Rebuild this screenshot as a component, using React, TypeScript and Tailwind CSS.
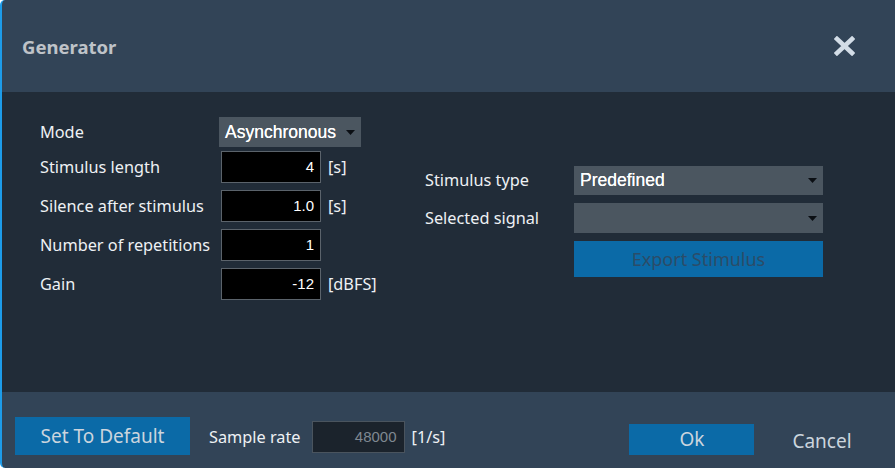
import React from "react";

const LABEL_FONT = "font-['Noto_Sans',sans-serif]";
const FIELD_FONT = "font-['Liberation_Sans',Arial,sans-serif]";

type FieldRow = {
  label: string;
  value: string;
  unit?: string;
};

const FIELDS: FieldRow[] = [
  { label: "Stimulus length", value: "4", unit: "[s]" },
  { label: "Silence after stimulus", value: "1.0", unit: "[s]" },
  { label: "Number of repetitions", value: "1" },
  { label: "Gain", value: "-12", unit: "[dBFS]" },
];

const Caret = () => (
  <svg width="9" height="5" viewBox="0 0 9 5" className="shrink-0">
    <path d="M0 0h9L4.5 5z" fill="#0b0f14" />
  </svg>
);

const CloseIcon = () => (
  <svg width="21" height="20" viewBox="0 0 21 20">
    <path
      d="M3 3l15 14M18 3L3 17"
      stroke="#d3dde7"
      strokeWidth="4.6"
      strokeLinecap="square"
    />
  </svg>
);

const Select = ({ value, className }: { value: string; className: string }) => (
  <div
    className={`flex items-center justify-between bg-[#4b5660] pl-[6px] pr-[6px] text-[17.5px] text-white ${FIELD_FONT} ${className}`}>
    <span className="[text-shadow:0_0_0.4px_#fff]">{value}</span>
    <Caret />
  </div>
);

const NumberInput = ({ value }: { value: string }) => (
  <div
    className={`flex h-[32px] w-[100px] items-center justify-end border border-[#5b636b] bg-black pr-[6px] text-[15px] text-white ${FIELD_FONT}`}>
    {value}
  </div>
);

export default function App() {
  return (
    <div
      className={`flex h-[468px] w-[895px] flex-col overflow-hidden rounded-l-[5px] border-l-2 border-[#1d9ce9] bg-[#324457] ${LABEL_FONT}`}>
      {/* header */}
      <div className="flex h-[92px] shrink-0 items-center justify-between pl-[20px] pr-[40px]">
        <h1 className="mt-[2px] text-[18.5px] font-bold text-[#bfc3c8]">Generator</h1>
        <CloseIcon />
      </div>

      {/* body */}
      <div className="flex flex-1 bg-[#212c38] pl-[38px] pt-[25px] text-[16.3px] text-[#eef1f4]">
        <div className="flex w-[385px] flex-col">
          <div className="flex h-[30px] items-center">
            <span className="w-[179px]">Mode</span>
            <Select value="Asynchronous" className="h-[30px] w-[142px]" />
          </div>
          <div className="mt-[4px] flex flex-col gap-[7px]">
            {FIELDS.map((field) => (
              <div key={field.label} className="flex h-[32px] items-center">
                <span className="w-[181px]">{field.label}</span>
                <NumberInput value={field.value} />
                {field.unit && <span className="ml-[7px]">{field.unit}</span>}
              </div>
            ))}
          </div>
        </div>

        <div className="flex flex-col pt-[49px]">
          <div className="flex h-[29px] items-center">
            <span className="w-[149px]">Stimulus type</span>
            <Select value="Predefined" className="h-[29px] w-[249px]" />
          </div>
          <div className="mt-[8px] flex h-[30px] items-center">
            <span className="w-[149px]">Selected signal</span>
            <Select value="" className="h-[30px] w-[249px]" />
          </div>
          <div className="mt-[8px] flex">
            <div className="w-[149px]" />
            <button className="h-[36px] w-[249px] bg-[#0b6aa7] text-[18px] text-[#2b4c68]">
              Export Stimulus
            </button>
          </div>
        </div>
      </div>

      {/* footer */}
      <div className="flex h-[76px] shrink-0 items-start pl-[13px] pt-[25px] text-[16.3px] text-[#eef1f4]">
        <button className="h-[38px] w-[175px] bg-[#0b6aa7] text-[19px] text-[#cbd5de]">
          Set To Default
        </button>
        <span className="ml-[19px] mt-[8px]">Sample rate</span>
        <div
          className={`ml-[11px] mt-[4px] flex h-[32px] w-[93px] items-center justify-end border border-[#4a545e] bg-[#1b232c] pr-[7px] text-[15px] text-[#7f8891] ${FIELD_FONT}`}>
          48000
        </div>
        <span className="ml-[7px] mt-[8px]">[1/s]</span>
        <button className="ml-[184px] mt-[7px] h-[31px] w-[125px] bg-[#0b6aa7] text-[19px] text-[#cbd5de]">
          Ok
        </button>
        <span className="ml-[38px] mt-[10px] text-[19px] text-[#cbd5de]">Cancel</span>
      </div>
    </div>
  );
}
